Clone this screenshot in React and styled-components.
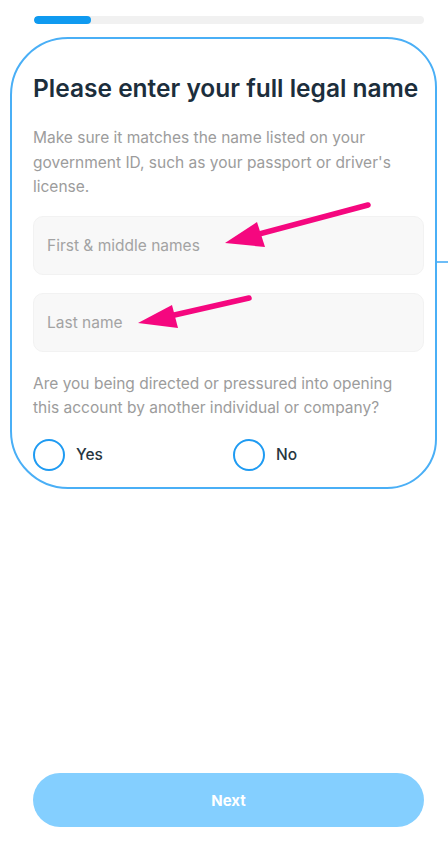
import React from "react";
import styled, { createGlobalStyle } from "styled-components";

const Global = createGlobalStyle`
  * { box-sizing: border-box; }
  html, body { margin: 0; padding: 0; background: #ffffff; }
  body { font-family: Inter, "Noto Sans", "Liberation Sans", sans-serif; }
`;

const Screen = styled.div`
  position: relative;
  min-height: 100vh;
  display: flex;
  flex-direction: column;
  padding: 16px 24px 36px 33px;
  overflow: hidden;
`;

const Track = styled.div`
  height: 8px;
  margin-left: 1px;
  border-radius: 4px;
  background: #f1f1f1;
  overflow: hidden;
`;

const Fill = styled.div`
  height: 100%;
  border-radius: 4px;
  background: #0f9af0;
`;

const Section = styled.section`
  position: relative;
  margin-top: 49px;
  display: flex;
  flex-direction: column;
`;

const Highlight = styled.div`
  position: absolute;
  top: -36px;
  left: -23px;
  right: -13px;
  bottom: -18px;
  border: 2px solid #4aaff6;
  border-radius: 58px 50px 50px 58px;
  pointer-events: none;
`;

const Title = styled.h1`
  margin: 0;
  font-size: 24.5px;
  font-weight: 600;
  line-height: 30px;
  letter-spacing: 0;
  color: #1c2e3c;
  white-space: nowrap;
`;

const Lead = styled.p`
  margin: ${(p) => p.$top}px 0 0;
  max-width: 380px;
  font-size: 15.5px;
  line-height: 24.5px;
  color: #9c9c9c;
`;

const Field = styled.input`
  margin-top: ${(p) => p.$top}px;
  height: 59px;
  width: 100%;
  padding: 0 13px;
  border: 1px solid #f2f2f2;
  border-radius: 10px;
  background: #f8f8f8;
  font-family: inherit;
  font-size: 15.5px;
  color: #333;
  outline: none;
  &::placeholder { color: #a3a3a3; }
`;

const Choices = styled.div`
  margin-top: 18px;
  display: grid;
  grid-template-columns: 1fr 1fr;
  column-gap: 9px;
`;

const Choice = styled.label`
  display: flex;
  align-items: center;
  gap: 11px;
  font-size: 15.5px;
  font-weight: 500;
  color: #27363f;
`;

const Ring = styled.span`
  width: 32px;
  height: 32px;
  border-radius: 50%;
  border: 2.5px solid #1f9bf2;
  flex: none;
`;

const Spacer = styled.div`
  flex: 1;
`;

const NextButton = styled.button`
  height: 54px;
  width: 100%;
  border: none;
  border-radius: 27px;
  background: #84cfff;
  color: #ffffff;
  font-family: inherit;
  font-size: 15px;
  font-weight: 700;
`;

const Marks = styled.svg`
  position: absolute;
  top: 0;
  left: 0;
  pointer-events: none;
`;

export default function App() {
  return (
    <>
      <Global />
      <Screen>
        <Track>
          <Fill style={{ width: "14.5%" }} />
        </Track>
        <Section>
          <Highlight />
          <Title>Please enter your full legal name</Title>
          <Lead $top={23}>
            Make sure it matches the name listed on your government ID, such as your passport or driver's license.
          </Lead>
          <Field $top={16} placeholder="First & middle names" />
          <Field $top={18} placeholder="Last name" />
          <Lead $top={20}>
            Are you being directed or pressured into opening this account by another individual or company?
          </Lead>
          <Choices>
            <Choice><Ring />Yes</Choice>
            <Choice><Ring />No</Choice>
          </Choices>
        </Section>
        <Spacer />
        <NextButton>Next</NextButton>
        <Marks width="448" height="863" viewBox="0 0 448 863">
          <line x1="437" y1="262" x2="448" y2="262" stroke="#6dbdf7" strokeWidth="2" />
          <line x1="368" y1="205" x2="252" y2="236" stroke="#f5077f" strokeWidth="5.5" strokeLinecap="round" />
          <polygon points="225,243 257,222 265,247" fill="#f5077f" />
          <line x1="249" y1="298" x2="170" y2="316" stroke="#f5077f" strokeWidth="5.5" strokeLinecap="round" />
          <polygon points="138,323 172,305 178,328" fill="#f5077f" />
        </Marks>
      </Screen>
    </>
  );
}
